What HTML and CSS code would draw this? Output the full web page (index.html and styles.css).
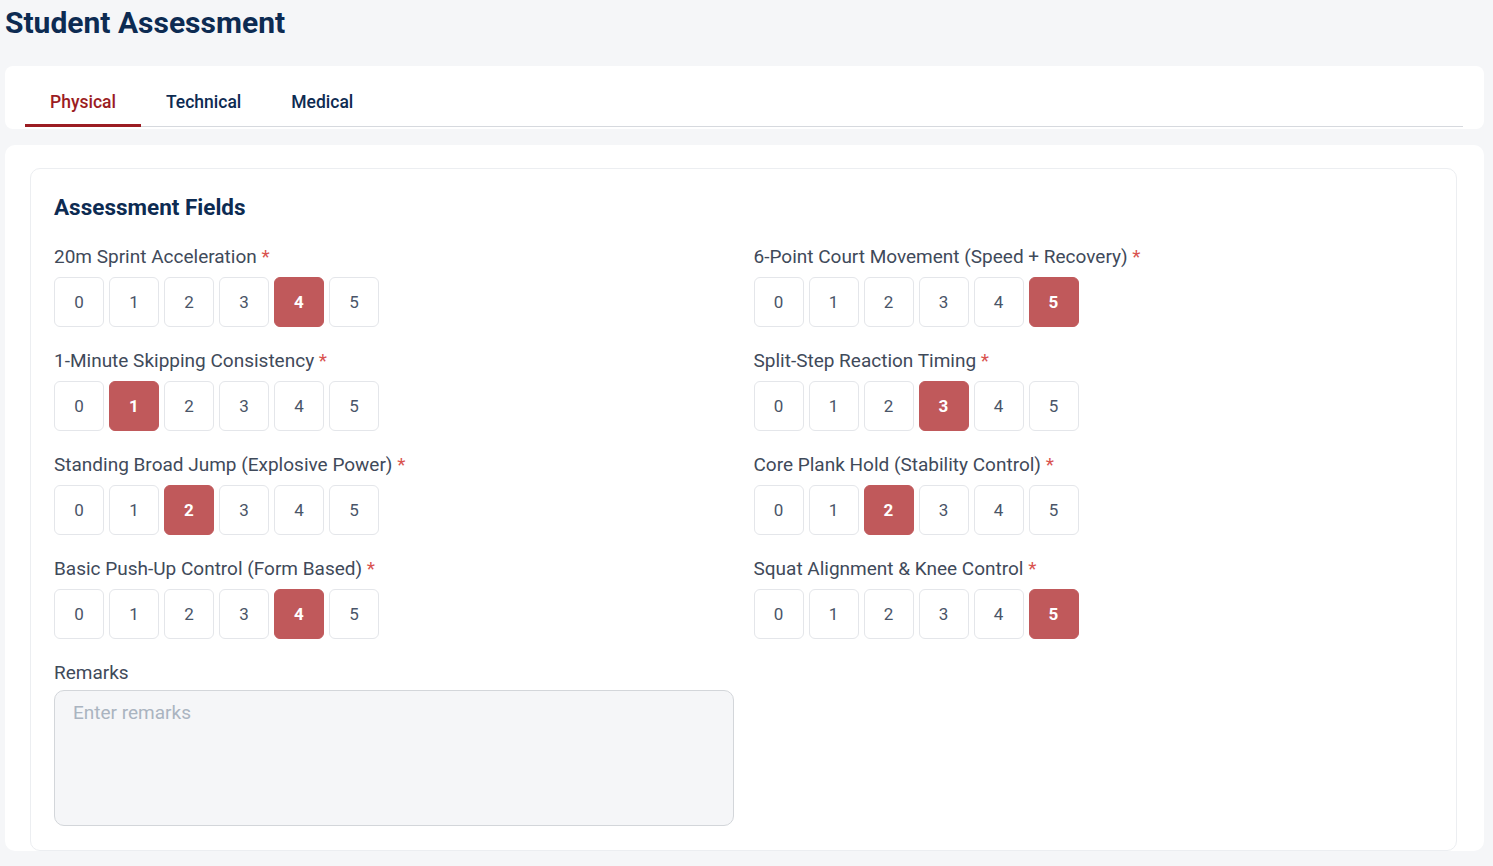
FILE: index.html
```html
<!DOCTYPE html>
<html>
<head>
    <title>Student Assessment</title>
    <link rel="stylesheet" href="styles.css">
</head>
<body>

<h1 class="page-title">Student Assessment</h1>

<div class="tabs-card">
    <div class="tabs">
        <div class="tab active">Physical</div>
        <div class="tab">Technical</div>
        <div class="tab">Medical</div>
    </div>
</div>

<div class="main-card">
    <div class="fields-box">
        <h2 class="box-title">Assessment Fields</h2>

        <div class="fields-grid">
            <div class="field">
                <label>20m Sprint Acceleration <span class="req">*</span></label>
                <div class="scores">
                    <button>0</button><button>1</button><button>2</button><button>3</button><button class="on">4</button><button>5</button>
                </div>
            </div>
            <div class="field">
                <label>6-Point Court Movement (Speed + Recovery) <span class="req">*</span></label>
                <div class="scores">
                    <button>0</button><button>1</button><button>2</button><button>3</button><button>4</button><button class="on">5</button>
                </div>
            </div>
            <div class="field">
                <label>1-Minute Skipping Consistency <span class="req">*</span></label>
                <div class="scores">
                    <button>0</button><button class="on">1</button><button>2</button><button>3</button><button>4</button><button>5</button>
                </div>
            </div>
            <div class="field">
                <label>Split-Step Reaction Timing <span class="req">*</span></label>
                <div class="scores">
                    <button>0</button><button>1</button><button>2</button><button class="on">3</button><button>4</button><button>5</button>
                </div>
            </div>
            <div class="field">
                <label>Standing Broad Jump (Explosive Power) <span class="req">*</span></label>
                <div class="scores">
                    <button>0</button><button>1</button><button class="on">2</button><button>3</button><button>4</button><button>5</button>
                </div>
            </div>
            <div class="field">
                <label>Core Plank Hold (Stability Control) <span class="req">*</span></label>
                <div class="scores">
                    <button>0</button><button>1</button><button class="on">2</button><button>3</button><button>4</button><button>5</button>
                </div>
            </div>
            <div class="field">
                <label>Basic Push-Up Control (Form Based) <span class="req">*</span></label>
                <div class="scores">
                    <button>0</button><button>1</button><button>2</button><button>3</button><button class="on">4</button><button>5</button>
                </div>
            </div>
            <div class="field">
                <label>Squat Alignment &amp; Knee Control <span class="req">*</span></label>
                <div class="scores">
                    <button>0</button><button>1</button><button>2</button><button>3</button><button>4</button><button class="on">5</button>
                </div>
            </div>
            <div class="field remarks">
                <label>Remarks</label>
                <textarea placeholder="Enter remarks"></textarea>
            </div>
        </div>
    </div>
</div>

</body>
</html>
```

FILE: styles.css
```css
body {
    margin: 0; padding: 0 9px 0 5px;
    font-family: Roboto, "Liberation Sans", sans-serif;
    background: #f5f6f8; color: #3f4a5a;
}
.page-title {
    margin: 0; padding-top: 6px; height: 60px;
    font-size: 30px; line-height: 34px; font-weight: 700; color: #0d2b52;
}

/* tabs */
.tabs-card {
    background: white; border-radius: 8px;
    padding: 14px 21px 2px 20px;
}
.tabs { display: flex; border-bottom: 1px solid #d6d9de; }
.tab {
    padding: 11px 25px 11px; font-size: 17.5px; line-height: 22px;
    font-weight: 500; color: #0d2b52; margin-bottom: -1px;
    border-bottom: 3px solid transparent;
}
.tab.active { color: #9b1c22; border-bottom-color: #9b1c22; }

/* main */
.main-card {
    margin-top: 16px; background: white; border-radius: 10px;
    padding: 23px 27px 0 25px;
}
.fields-box {
    border: 1px solid #eceef1; border-radius: 10px;
    padding: 24px 23px 24px 23px;
}
.box-title {
    margin: 0 0 24px; font-size: 22.5px; line-height: 28px;
    font-weight: 700; color: #0d2b52;
}
.fields-grid {
    display: grid; grid-template-columns: 1fr 1fr;
    column-gap: 20px; row-gap: 22px;
}
.field label {
    display: block; font-size: 19px; line-height: 24px;
    color: #3f4a5a; margin-bottom: 8px;
}
.req { color: #d9534f; }
.scores { display: flex; gap: 5px; }
.scores button {
    width: 50px; height: 50px; padding: 0;
    border: 1px solid #e4e6ea; border-radius: 6px; background: white;
    font-family: inherit; font-size: 17px; color: #4a5568; cursor: pointer;
}
.scores button.on {
    background: #c0595b; border-color: #c0595b;
    color: white; font-weight: 700;
}
.remarks label { margin-bottom: 5px; }
.remarks textarea {
    display: block; width: 100%; height: 136px; box-sizing: border-box;
    background: #f5f6f8; border: 1px solid #d3d6da; border-radius: 10px;
    padding: 11px 18px; resize: none;
    font-family: inherit; font-size: 19px; line-height: 22px; color: #3f4a5a;
}
.remarks textarea::placeholder { color: #aab4c0; }
```
